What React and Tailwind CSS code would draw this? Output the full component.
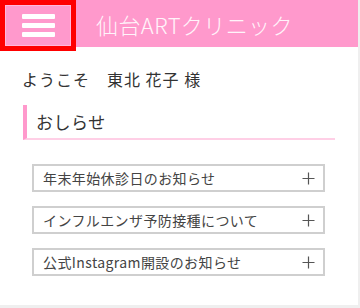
import React from 'react';

const NOTICES = [
    '年末年始休診日のお知らせ',
    'インフルエンザ予防接種について',
    '公式Instagram開設のお知らせ',
];

function PlusIcon() {
    return (
        <svg width="13" height="13" viewBox="0 0 13 13" className="shrink-0">
            <path d="M6.5 0.5v12M0.5 6.5h12" stroke="#555" strokeWidth="1.2" fill="none" />
        </svg>
    );
}

function NoticeRow({ title }) {
    return (
        <button className="w-[293px] h-[28px] border-2 border-[#cfcfcf] bg-white flex items-center justify-between pl-[9px] pr-[8px] text-left">
            <span className="text-[14px] leading-none tracking-[0.4px] text-[#444]">{title}</span>
            <PlusIcon />
        </button>
    );
}

export default function App() {
    return (
        <div
            className="w-[360px] h-[308px] bg-[#efefef] overflow-hidden"
            style={{ fontFamily: '"Noto Sans CJK JP", "Noto Sans", sans-serif' }}
        >
            <div className="w-[358px] h-[305px] bg-white flex flex-col">
                <header className="h-[47px] bg-[#ff99cc] flex items-start shrink-0">
                    <button className="w-[76px] h-[51px] border-[5px] border-[#ff0000] bg-[#ff99cc] shadow-[inset_0_0_0_1px_#ffb8dc] flex flex-col items-center justify-center gap-[4px] relative z-10">
                        <span className="block w-[33px] h-[5px] bg-white rounded-[1px]" />
                        <span className="block w-[33px] h-[5px] bg-white rounded-[1px]" />
                        <span className="block w-[33px] h-[5px] bg-white rounded-[1px]" />
                    </button>
                    <h1 className="ml-[20px] self-center text-[22px] font-light tracking-[0.4px] text-[#fff4fa] leading-none">
                        仙台ARTクリニック
                    </h1>
                </header>

                <main className="pl-[22px] pt-[20px]">
                    <p className="text-[16px] leading-[24px] tracking-[1px] text-[#333]">
                        ようこそ　東北 花子 様
                    </p>

                    <div className="mt-[14px] ml-px w-[312px] h-[35px] border-l-4 border-l-[#ff99cc] border-b-2 border-b-[#ffcfe6] flex items-center pl-[9px]">
                        <h2 className="text-[17px] leading-none tracking-[0.5px] text-[#333] font-normal">おしらせ</h2>
                    </div>

                    <div className="mt-[24px] ml-[10px] flex flex-col gap-[14px]">
                        {NOTICES.map(title => (
                            <NoticeRow key={title} title={title} />
                        ))}
                    </div>
                </main>
            </div>
        </div>
    );
}
